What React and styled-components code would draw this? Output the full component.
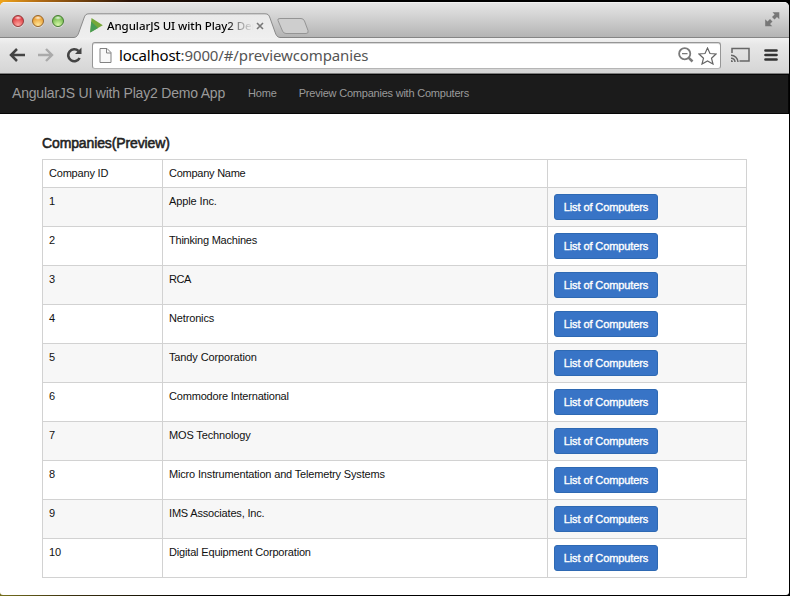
import React from "react";
import styled, { createGlobalStyle } from "styled-components";

const Global = createGlobalStyle`
  * { box-sizing: border-box; }
  body { margin: 0; background: #000; overflow: hidden; }
  svg { display: block; flex: none; }
`;

const uiFont = `"Noto Sans", "Open Sans", sans-serif`;
const pageFont = `"Liberation Sans", Arial, sans-serif`;

const Desktop = styled.div`
  width: 790px;
  height: 596px;
  padding: 2px 1px 1px 0;
  background:
    linear-gradient(90deg, #f0a51c, #b06a14 40px, #2a1205 130px, #000 260px) top / 100% 12px no-repeat,
    linear-gradient(90deg, #76701c, #3c3210 70px, #000 200px) bottom / 100% 12px no-repeat,
    #000;
`;

const BrowserWindow = styled.div`
  display: flex;
  flex-direction: column;
  height: 593px;
  border-radius: 5px 5px 3px 3px;
  background: #fff;
  overflow: hidden;
`;

const TabStrip = styled.header`
  display: flex;
  height: 36px;
  background: linear-gradient(#e5e5e5, #d2d2d2 40%, #b2b2b2);
  border-top: 1px solid #f1f1f1;
  box-shadow: inset 0 -1px #858585;
`;

const Lights = styled.div`
  display: flex;
  gap: 8px;
  width: 74px;
  padding: 12px 0 0 12px;
`;

const Light = styled.i`
  width: 12px;
  height: 12px;
  border-radius: 50%;
  border: 1px solid ${(p) => p.$edge};
  background:
    radial-gradient(ellipse 4px 2px at 50% 18%, #ffffffd9, #ffffff00),
    radial-gradient(circle at 50% 90%, ${(p) => p.$glow}, ${(p) => p.$tone} 75%);
  box-shadow: 0 1px #ffffff70;
`;

const Tab = styled.div`
  display: grid;
  width: 206px;
  height: 35px;
  > * { grid-area: 1 / 1; }
`;

const TabContent = styled.div`
  display: flex;
  align-items: flex-start;
  padding: 14px 0 0 16px;
`;

const TabTitle = styled.span`
  width: 148px;
  margin: 1px 0 0 4px;
  white-space: nowrap;
  font: 500 11.5px/16px ${uiFont};
  letter-spacing: ${(p) => p.$track}px;
  color: #000;
  mask-image: linear-gradient(90deg, #000 120px, #0006 132px, transparent 147px);
`;

const CloseIcon = styled.svg`
  margin: 5px 0 0 1px;
`;

const NewTabIcon = styled.svg`
  margin: 14px 0 0 -4px;
`;

const FullscreenIcon = styled.svg`
  margin: 9px 9px 0 auto;
`;

const Toolbar = styled.div`
  display: flex;
  align-items: center;
  height: 36px;
  padding: 0 11px 1px 9px;
  background: linear-gradient(#f1f1f1, #e7e7e7 20%, #d5d5d5);
  border-bottom: 1px solid #7d7d7d;
`;

const NavIcons = styled.div`
  display: flex;
  gap: 12px;
  width: 83px;
`;

const AddressBar = styled.div`
  display: flex;
  align-items: center;
  width: 629px;
  height: 27px;
  padding: 0 3px 0 6px;
  background: #fff;
  border: 1px solid #969696;
  border-bottom-color: #b5b5b5;
  border-radius: 3px;
  box-shadow: inset 0 1px #d7d7d7;
`;

const Url = styled.span`
  flex: 1;
  margin-left: 7px;
  white-space: nowrap;
  font: 15px/20px ${uiFont};
  letter-spacing: ${(p) => p.$track}px;
  color: #555;
  b { font-weight: 400; color: #000; letter-spacing: -0.2px; }
`;

const AddressActions = styled.div`
  display: flex;
  gap: 4px;
  margin-top: 1px;
`;

const CastIcon = styled.svg`
  margin-left: 9px;
`;

const MenuIcon = styled.svg`
  margin-left: auto;
`;

const Navbar = styled.nav`
  display: flex;
  align-items: center;
  height: 40px;
  padding: 0 0 2px 12px;
  background: #1b1b1b;
  border: 1px solid #050505;
  border-width: 1px 1px 1px 0;
  font-family: ${pageFont};
  color: #9a9a9a;
  white-space: nowrap;
`;

const Brand = styled.a`
  width: 236px;
  font-size: 14px;
  letter-spacing: ${(p) => p.$track}px;
`;

const NavLink = styled.a`
  margin-right: 22px;
  font-size: 11px;
  letter-spacing: ${(p) => p.$track}px;
`;

const Content = styled.main`
  flex: 1;
  padding: 20px 42px 0;
  font-family: ${pageFont};
  color: #222;
`;

const Heading = styled.h4`
  height: 18px;
  margin: 0 0 7px;
  font-size: 14px;
  font-weight: 400;
  line-height: 18px;
  letter-spacing: ${(p) => p.$track}px;
  -webkit-text-stroke: 0.55px #222;
`;

const Table = styled.div`
  width: 705px;
  border: 1px solid #d2d2d2;
  border-width: 1px 0 0 1px;
`;

const Row = styled.div`
  display: grid;
  grid-template-columns: 120px 385px 199px;
  height: ${(p) => (p.$head ? 28 : 39)}px;
  background: ${(p) => (p.$striped ? "#f7f7f7" : "#fff")};
`;

const Cell = styled.div`
  padding: 6px;
  border: 1px solid #d2d2d2;
  border-width: 0 1px 1px 0;
  font-size: 11px;
  line-height: 15px;
  letter-spacing: ${(p) => p.$track || 0}px;
  color: #111;
  white-space: nowrap;
`;

const Button = styled.button`
  display: block;
  width: 104px;
  height: 26px;
  padding: 0;
  border: 1px solid #2e69b3;
  border-radius: 3px;
  background: #3874c6;
  color: #fff;
  font: 11px/22px ${pageFont};
  letter-spacing: ${(p) => p.$track}px;
  -webkit-text-stroke: 0.35px #fff;
`;

const companies = [
  ["Apple Inc.", -0.12],
  ["Thinking Machines", -0.22],
  ["RCA", -0.5],
  ["Netronics", -0.15],
  ["Tandy Corporation", -0.13],
  ["Commodore International", -0.19],
  ["MOS Technology", -0.14],
  ["Micro Instrumentation and Telemetry Systems", -0.165],
  ["IMS Associates, Inc.", -0.18],
  ["Digital Equipment Corporation", -0.17],
];

export default function App() {
  return (
    <>
      <Global />
      <Desktop>
        <BrowserWindow>
          <TabStrip>
            <Lights>
              <Light $edge="#963a3b" $tone="#df393f" $glow="#ffaaa2" />
              <Light $edge="#99662a" $tone="#e99c2d" $glow="#ffe79b" />
              <Light $edge="#467d32" $tone="#70b84b" $glow="#d9f9a9" />
            </Lights>
            <Tab>
              <svg width="206" height="35" viewBox="0 0 206 35">
                <defs>
                  <linearGradient id="tabFill" x1="0" y1="0" x2="0" y2="1">
                    <stop offset="0" stopColor="#e9e9e9" />
                    <stop offset="1" stopColor="#efefef" />
                  </linearGradient>
                </defs>
                <path d="M0 34.5C3 34.2 4 32 5 29L10 15C11 12 12 10.8 15 10.8H191C194 10.8 195 12 196 15L201 29C202 32 203 34.2 206 34.5V36H0Z" fill="url(#tabFill)" />
                <path d="M0 34.5C3 34.2 4 32 5 29L10 15C11 12 12 10.8 15 10.8H191C194 10.8 195 12 196 15L201 29C202 32 203 34.2 206 34.5" fill="none" stroke="#8a8a8a" />
              </svg>
              <TabContent>
                <svg width="13" height="17" viewBox="0 0 13 17">
                  <path d="M1.5 1L12.8 8.2L.2 15.4Z" fill="#76a83a" />
                  <path d="M1.2 4.5L8 11L.2 15.4Z" fill="#479c55" />
                </svg>
                <TabTitle $track={-0.06}>AngularJS UI with Play2 Dem</TabTitle>
                <CloseIcon width="8" height="8" viewBox="0 0 8 8">
                  <path d="M1 1L7 7M7 1L1 7" stroke="#777" strokeWidth="1.6" />
                </CloseIcon>
              </TabContent>
            </Tab>
            <NewTabIcon width="34" height="18" viewBox="0 0 34 18">
              <path d="M4 1.5H25Q27.500 1.500 28.500 4L32 13.500Q33 16.500 30 16.500H10Q7.500 16.500 6.500 14L2 3.500Q1 1.500 4 1.500Z" fill="#cecece" stroke="#949494" />
            </NewTabIcon>
            <FullscreenIcon width="15" height="15" viewBox="0 0 15 15">
              <path d="M7.500 .3H14.300V7.300L12 5L9.500 7.500L7 5L9.600 2.500ZM.2 7.200L2.500 9.400L5 7L7.500 9.500L5 12L7.300 14.200H.2Z" fill="#777" />
            </FullscreenIcon>
          </TabStrip>
          <Toolbar>
            <NavIcons>
              <svg width="17" height="16" viewBox="0 0 17 16">
                <path d="M2.500 8H16M8 2L2 8L8 14" fill="none" stroke="#444" strokeWidth="2.5" />
              </svg>
              <svg width="16" height="16" viewBox="0 0 16 16">
                <path d="M0 8H14M8 2L14 8L8 14" fill="none" stroke="#aaa" strokeWidth="2.4" />
              </svg>
              <svg width="17" height="16" viewBox="0 0 17 16">
                <path d="M13.600 11A6 6 0 1 1 12.500 4" fill="none" stroke="#444" strokeWidth="2.6" />
                <path d="M15.500 .5V7H9Z" fill="#444" />
              </svg>
            </NavIcons>
            <AddressBar>
              <svg width="13" height="17" viewBox="0 0 13 17">
                <path d="M1 1.500H8L12 5.500V15.500H1Z" fill="#f8f8f8" stroke="#828282" />
                <path d="M7.500 1.500V6H12" fill="none" stroke="#828282" />
              </svg>
              <Url $track={-0.12}><b>localhost</b>:9000/#/previewcompanies</Url>
              <AddressActions>
                <svg width="16" height="16" viewBox="0 0 16 16">
                  <path d="M10.300 10.300L14.500 14.500" stroke="#7a7a7a" strokeWidth="2.500" />
                  <circle cx="6.700" cy="6.700" r="5.600" fill="none" stroke="#7a7a7a" strokeWidth="1.800" />
                  <path d="M4 6.700H9.500" stroke="#7a7a7a" strokeWidth="1.300" />
                </svg>
                <svg width="19" height="18" viewBox="0 0 19 18">
                  <path d="M9.500 1L12 6.500L18 7L13.500 11.200L15 17L9.500 13.900L4 17L5.500 11.200L1 7L7 6.500Z" fill="#fff" stroke="#666" strokeWidth="1.200" />
                </svg>
              </AddressActions>
            </AddressBar>
            <CastIcon width="20" height="16" viewBox="0 0 20 16">
              <path d="M2 6V1.500H19V14H9.500" fill="none" stroke="#666" strokeWidth="1.500" />
              <path d="M1 8.200A7 7 0 0 1 8 15M1 11.200A4 4 0 0 1 5 15" fill="none" stroke="#666" strokeWidth="1.500" />
              <path d="M1 13A2 2 0 0 1 3 15H1Z" fill="#666" />
            </CastIcon>
            <MenuIcon width="14" height="14" viewBox="0 0 14 14">
              <path d="M1.500 2.500H12.500M1.500 7H12.500M1.500 11.500H12.500" stroke="#333" strokeWidth="2.700" strokeLinecap="round" />
            </MenuIcon>
          </Toolbar>
          <Navbar>
            <Brand $track={-0.2}>AngularJS UI with Play2 Demo App</Brand>
            <NavLink $track={-0.15}>Home</NavLink>
            <NavLink $track={-0.22}>Preview Companies with Computers</NavLink>
          </Navbar>
          <Content>
            <Heading $track={-0.12}>Companies(Preview)</Heading>
            <Table>
              <Row $head>
                <Cell $track={-0.2}>Company ID</Cell>
                <Cell $track={-0.25}>Company Name</Cell>
                <Cell />
              </Row>
              {companies.map(([name, track], index) => (
                <Row key={name} $striped={index % 2 === 0}>
                  <Cell>{index + 1}</Cell>
                  <Cell $track={track}>{name}</Cell>
                  <Cell>
                    <Button $track={-0.1}>List of Computers</Button>
                  </Cell>
                </Row>
              ))}
            </Table>
          </Content>
        </BrowserWindow>
      </Desktop>
    </>
  );
}
